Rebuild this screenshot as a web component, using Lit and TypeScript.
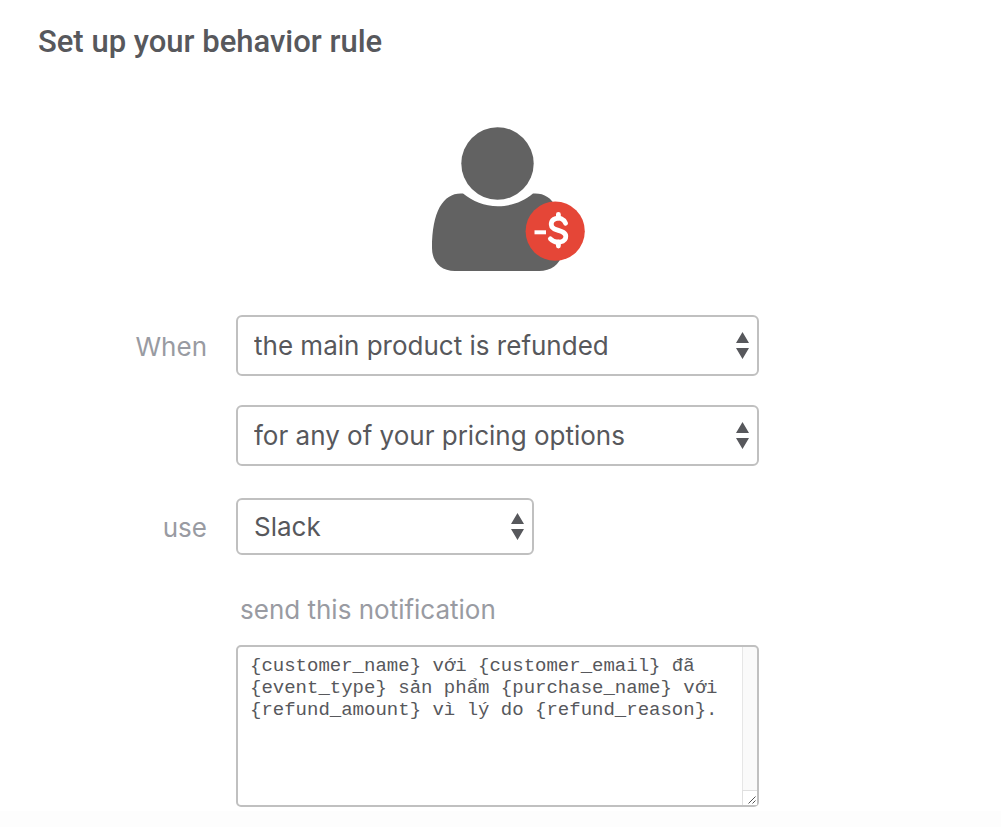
import { LitElement, html, css, svg } from "lit";
import { customElement, state } from "lit/decorators.js";

@customElement("refund-illustration")
class RefundIllustration extends LitElement {
  static styles = css`
    :host {
      display: block;
    }
    .art {
      display: block;
      width: 170px;
      height: 146px;
      margin: 0 auto;
    }
  `;

  render() {
    const dollar = svg`
      <path d="M149.5 97.2C147.6 92.6 143.4 91.5 139.6 92.6C134.4 94.2 133.7 100.2 138.2 102.8C141.8 104.9 149.6 105 149.8 110.2C150 116.4 140 118.6 134.4 112.8" />
      <path d="M142.4 88.3V92M142.4 116V120" />
    `;
    return html`
      <svg class="art" viewBox="0 0 170 146" role="img" aria-label="Customer refund">
        <circle cx="81.5" cy="37.5" r="36.2" fill="#626262" />
        <path
          d="M47 67.5C57 75.5 68 80.2 82 80.2C96 80.2 107 75.5 117 67.5C137 66 147 84 147 122C147 136 137 145 123 145H39C25 145 16 136 16 122C16 84 28 66 47 67.5Z"
          fill="#626262"
        />
        <circle cx="139.2" cy="105.2" r="29.6" fill="#e54637" />
        <g fill="none" stroke="#fff" stroke-width="4.8" stroke-linecap="round">${dollar}</g>
        <path d="M118.5 106.3H130" stroke="#fff" stroke-width="4" />
      </svg>
    `;
  }
}

@customElement("app-root")
class AppRoot extends LitElement {
  static styles = css`
    :host {
      display: flex;
      flex-direction: column;
      min-height: 100vh;
      box-sizing: border-box;
      background: #fff;
      color: #57585c;
      font-family: Inter, "Liberation Sans", sans-serif;
    }
    *,
    *::before {
      box-sizing: border-box;
    }
    .page {
      padding: 22px 38px 4px;
    }
    .title {
      margin: 0 0 64px;
      font-family: Roboto, Inter, sans-serif;
      font-size: 31px;
      line-height: 40px;
      font-weight: 500;
    }
    .form {
      display: grid;
      grid-template-columns: 169px minmax(0, 523px);
      column-gap: 29px;
      row-gap: 29px;
      align-items: center;
      margin-top: 43px;
    }
    .label {
      padding-top: 2px;
      color: #999ba2;
      font-size: 26px;
      line-height: 32px;
      text-align: right;
    }
    .field {
      grid-column: 2;
    }
    .select {
      display: block;
      width: 100%;
      height: 61px;
      padding: 0 40px 0 16px;
      border: 2px solid #c0c0c0;
      border-radius: 6px;
      background: #fff
        url("data:image/svg+xml,%3Csvg xmlns='http://www.w3.org/2000/svg' width='13' height='27'%3E%3Cpath d='M6.5 0L13 11H0ZM0 16H13L6.5 27Z' fill='%2357585c'/%3E%3C/svg%3E")
        no-repeat right 8px center;
      appearance: none;
      color: inherit;
      font-family: inherit;
      font-size: 26px;
      line-height: 32px;
    }
    .narrow {
      width: 57%;
      height: 57px;
      margin: 3px 0;
    }
    .message {
      display: flex;
      flex-direction: column;
      gap: 19px;
      margin-top: 5px;
    }
    .message .label {
      padding-left: 4px;
      text-align: left;
    }
    .text {
      display: block;
      width: 100%;
      height: 162px;
      margin: 0;
      padding: 8px 12px;
      border: 2px solid #c0c0c0;
      border-radius: 5px;
      background: linear-gradient(to left, #fafafa 14px, #e6e6e6 14px, #e6e6e6 15px, #fff 15px);
      color: inherit;
      font-family: "Liberation Mono", monospace;
      font-size: 19px;
      line-height: 22px;
      overflow-y: scroll;
      resize: both;
    }
    .text::-webkit-scrollbar {
      width: 15px;
    }
    .text::-webkit-resizer {
      border-top: 1px solid #e0e0e0;
      border-left: 1px solid #e0e0e0;
      background: #fff
        url("data:image/svg+xml,%3Csvg xmlns='http://www.w3.org/2000/svg' width='8' height='8'%3E%3Cpath d='M0.5 7.5L7.5 0.5M4.5 7.5L7.5 4.5' stroke='%23555'/%3E%3C/svg%3E")
        no-repeat right 1px bottom 1px;
    }
    .strip {
      flex: 1;
      background: #fdfdfd;
    }
  `;

  @state() private message =
    "{customer_name} với {customer_email} đã {event_type} sản phẩm {purchase_name} với {refund_amount} vì lý do {refund_reason}.";

  private onInput(e: Event) {
    this.message = (e.target as HTMLTextAreaElement).value;
  }

  render() {
    return html`
      <main class="page">
        <h1 class="title">Set up your behavior rule</h1>
        <refund-illustration></refund-illustration>
        <form class="form">
          <label class="label" for="event">When</label>
          <select class="select" id="event">
            <option>the main product is refunded</option>
          </select>
          <div class="field">
            <select class="select" aria-label="Pricing options">
              <option>for any of your pricing options</option>
            </select>
          </div>
          <label class="label" for="channel">use</label>
          <select class="select narrow" id="channel">
            <option>Slack</option>
          </select>
          <div class="field message">
            <label class="label" for="message">send this notification</label>
            <textarea class="text" id="message" spellcheck="false" .value=${this.message} @input=${this.onInput}></textarea>
          </div>
        </form>
      </main>
      <div class="strip"></div>
    `;
  }
}
